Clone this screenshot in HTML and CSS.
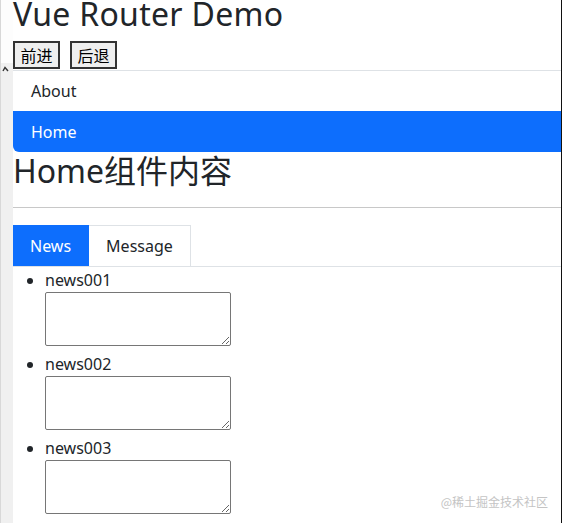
FILE: index.html
```html
<!DOCTYPE html>
<html lang="zh-CN">
<head>
    <meta charset="UTF-8">
    <meta name="viewport" content="width=device-width, initial-scale=1.0">
    <title>Vue Router Demo</title>
    <link rel="stylesheet" href="styles.css">
</head>
<body>
    <div class="frame">
        <div class="gutter">
            <svg class="caret" width="8" height="6" viewBox="0 0 8 6">
                <polyline points="1,5 3,1.5 6,5" fill="none" stroke="#333" stroke-width="1.4"/>
            </svg>
        </div>

        <div class="app">
            <h1 class="page-title">Vue Router Demo</h1>

            <div class="history-btns">
                <button type="button">前进</button>
                <button type="button">后退</button>
            </div>

            <div class="list-group">
                <a class="list-item" href="#/about">About</a>
                <a class="list-item active" href="#/home">Home</a>
            </div>

            <h2 class="section-title">Home组件内容</h2>
            <hr class="divider">

            <div class="tabs">
                <a class="tab active" href="#/home/news">News</a>
                <a class="tab" href="#/home/message">Message</a>
            </div>

            <ul class="news-list">
                <li>
                    <span class="news-name">news001</span>
                    <textarea rows="2"></textarea>
                </li>
                <li>
                    <span class="news-name">news002</span>
                    <textarea rows="2"></textarea>
                </li>
                <li>
                    <span class="news-name">news003</span>
                    <textarea rows="2"></textarea>
                </li>
            </ul>
        </div>
    </div>

    <div class="watermark">@稀土掘金技术社区</div>
</body>
</html>
```

FILE: styles.css
```css
* {
    margin: 0;
    padding: 0;
    box-sizing: border-box;
}

body {
    width: 562px;
    height: 523px;
    overflow: hidden;
    background: #fff;
    color: #212529;
    font-family: "Noto Sans", "Noto Sans CJK SC", sans-serif;
    font-size: 16px;
}

.frame {
    display: flex;
    height: 523px;
    border-right: 1px solid #111;
}

.gutter {
    width: 13px;
    flex-shrink: 0;
    background: linear-gradient(to bottom, #fdfdfd 0, #fdfdfd 63px, #f0f0f0 63px);
    border-left: 1px solid #d8d8d8;
    padding-top: 66px;
}

.caret {
    display: block;
    margin-left: 1px;
}

.app {
    flex: 1;
    min-width: 0;
}

.page-title {
    margin-top: -4px;
    font-size: 32px;
    line-height: 36px;
    font-weight: 400;
    letter-spacing: 0.3px;
}

.history-btns {
    display: flex;
    gap: 10px;
    margin-top: 9px;
    margin-bottom: 1px;
}

.history-btns button {
    width: 47px;
    font-family: "Noto Sans CJK SC", sans-serif;
    font-size: 16px;
    line-height: 20px;
    padding: 2px 0;
    color: #000;
    background: #efefef;
    border: 2px solid #333;
    border-radius: 0;
}

.list-group {
    display: flex;
    flex-direction: column;
    border-top: 1px solid #dee2e6;
}

.list-item {
    display: block;
    height: 40px;
    padding: 8px 18px;
    line-height: 24px;
    color: #212529;
    text-decoration: none;
}

.list-item.active {
    height: 41px;
    padding-top: 9px;
    color: #fff;
    background: #0d6efd;
    border-bottom-left-radius: 6px;
}

.section-title {
    font-size: 32px;
    line-height: 38px;
    font-weight: 400;
}

.divider {
    border: 0;
    border-top: 1px solid #c8c8c8;
    margin: 17px 0 17px;
}

.tabs {
    display: flex;
    height: 42px;
    border-bottom: 1px solid #dee2e6;
}

.tab {
    display: block;
    padding: 8px 17px;
    line-height: 24px;
    color: #212529;
    text-decoration: none;
    border: 1px solid #dee2e6;
    border-left: 0;
    border-bottom: 0;
}

.tab.active {
    color: #fff;
    background: #0d6efd;
    border-color: #0d6efd;
}

.news-list {
    margin-top: 2px;
    padding-left: 32px;
}

.news-list li {
    line-height: 22px;
    margin-bottom: 7px;
}

.news-name {
    display: block;
}

.news-list textarea {
    display: block;
    width: 186px;
    height: 54px;
    margin-top: 1px;
    border: 1px solid #767676;
    border-radius: 2px;
    font-family: monospace;
}

.watermark {
    position: absolute;
    right: 14px;
    bottom: 13px;
    font-family: "Noto Sans CJK SC", sans-serif;
    font-size: 12px;
    color: #c4c4c4;
}
```
